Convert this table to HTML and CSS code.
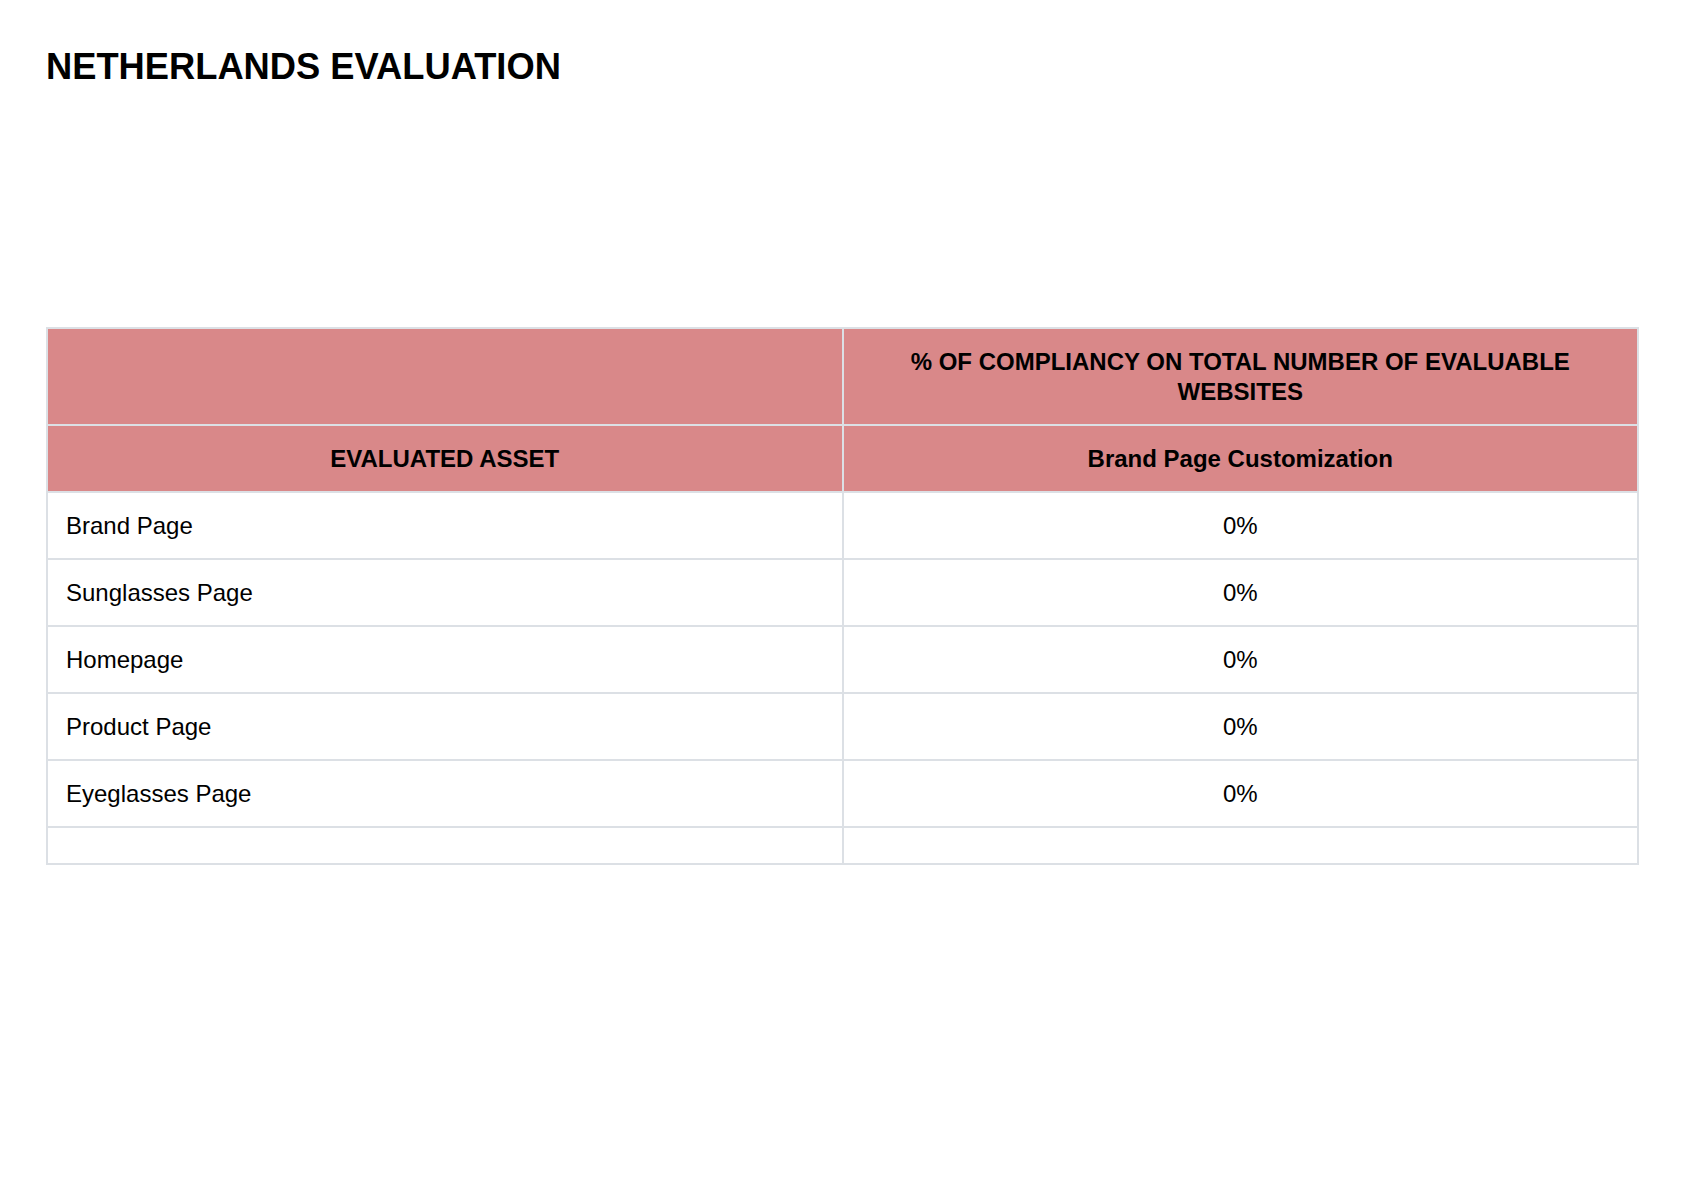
FILE: index.html
```html
<!DOCTYPE html>
<html lang="en">
<head>
<meta charset="utf-8">
<title>Netherlands Evaluation</title>
<link rel="stylesheet" href="styles.css">
</head>
<body>
<main class="page">
  <h1 class="title">NETHERLANDS EVALUATION</h1>
  <table class="report">
    <colgroup><col class="col-asset"><col class="col-value"></colgroup>
    <thead>
      <tr class="head-top">
        <th></th>
        <th>% OF COMPLIANCY ON TOTAL NUMBER OF EVALUABLE WEBSITES</th>
      </tr>
      <tr class="head-sub">
        <th>EVALUATED ASSET</th>
        <th>Brand Page Customization</th>
      </tr>
    </thead>
    <tbody>
      <tr><td class="asset">Brand Page</td><td class="value">0%</td></tr>
      <tr><td class="asset">Sunglasses Page</td><td class="value">0%</td></tr>
      <tr><td class="asset">Homepage</td><td class="value">0%</td></tr>
      <tr><td class="asset">Product Page</td><td class="value">0%</td></tr>
      <tr><td class="asset">Eyeglasses Page</td><td class="value">0%</td></tr>
      <tr class="empty"><td></td><td></td></tr>
    </tbody>
  </table>
</main>
</body>
</html>
```
FILE: styles.css
```css
html, body {
  margin: 0;
  padding: 0;
  background: #ffffff;
}

body {
  font-family: "Liberation Sans", Arial, Helvetica, sans-serif;
  color: #000000;
}

.page {
  padding: 46px 45px 0 46px;
}

.title {
  margin: 0;
  font-size: 36.3px;
  line-height: 41px;
  font-weight: bold;
  letter-spacing: 0;
}

.report {
  margin-top: 240px;
  width: 100%;
  border-collapse: collapse;
  table-layout: fixed;
  font-size: 24px;
  line-height: 30px;
}

.col-asset,
.col-value {
  width: 50%;
}

.report th,
.report td {
  border: 2px solid #dce0e5;
  padding: 17.5px 18px;
  vertical-align: middle;
}

.report th {
  background: #d98889;
  font-weight: bold;
  text-align: center;
}

.report td.asset {
  text-align: left;
}

.report td.value {
  text-align: center;
}

.report tr.empty td {
  height: 0;
  padding-top: 17.5px;
  padding-bottom: 17.5px;
  line-height: 0;
}
```
